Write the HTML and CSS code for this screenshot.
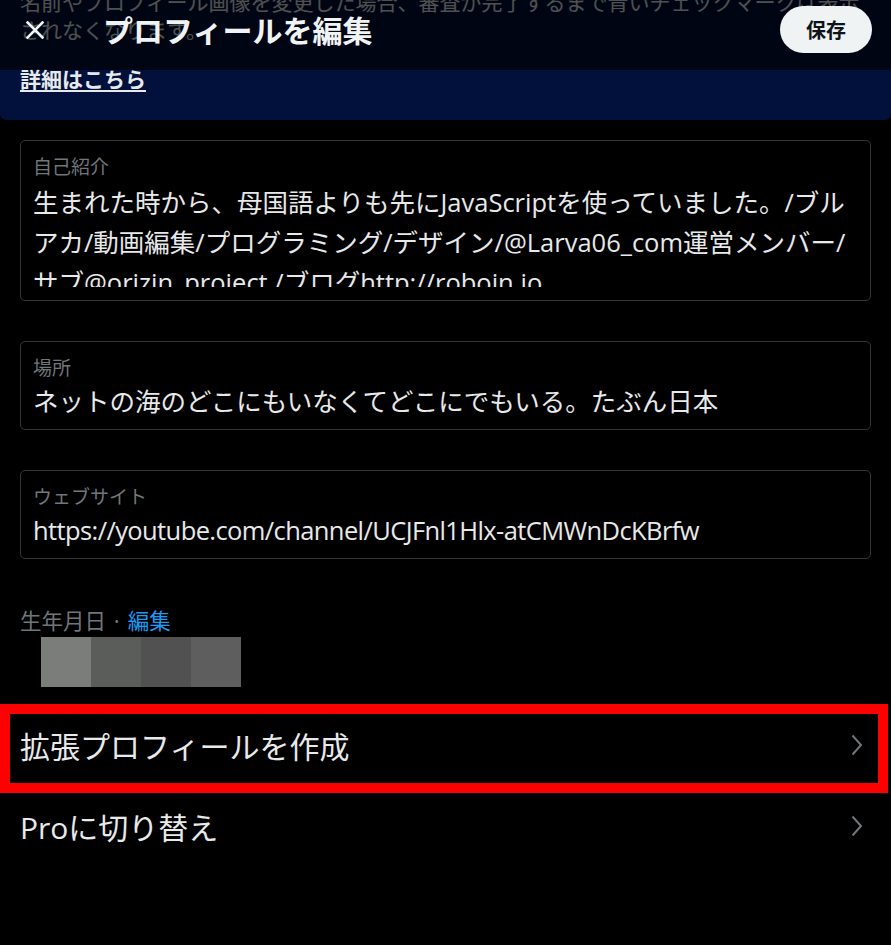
FILE: index.html
```html
<!DOCTYPE html>
<html lang="ja">
<head>
<meta charset="utf-8">
<title>プロフィールを編集</title>
<link rel="stylesheet" href="styles.css">
</head>
<body>
<div class="page">
  <header class="topbar">
    <div class="topbar-row">
      <button class="close-btn" aria-label="閉じる">
        <svg width="18" height="18" viewBox="0 0 18 18"><path d="M1.5 1.5 L16.5 16.5 M16.5 1.5 L1.5 16.5" stroke="#eff3f4" stroke-width="2.6" stroke-linecap="square" fill="none"/></svg>
      </button>
      <h1 class="title">プロフィールを編集</h1>
      <button class="save-btn">保存</button>
    </div>
  </header>

  <section class="notice">
    <p class="notice-text">名前やプロフィール画像を変更した場合、審査が完了するまで青いチェックマークは表示されなくなります。</p>
    <a class="notice-link" href="#">詳細はこちら</a>
  </section>

  <main class="form">
    <div class="field field-bio">
      <div class="field-label">自己紹介</div>
      <div class="field-area">生まれた時から、母国語よりも先にJavaScriptを使っていました。/ブル<br>アカ/動画編集/プログラミング/デザイン/@Larva06_com運営メンバー/<br>サブ@orizin_project /ブログhttp://roboin.io</div>
    </div>

    <div class="field">
      <div class="field-label">場所</div>
      <div class="field-input">ネットの海のどこにもいなくてどこにでもいる。たぶん日本</div>
    </div>

    <div class="field">
      <div class="field-label">ウェブサイト</div>
      <div class="field-input field-url">https://youtube.com/channel/UCJFnl1Hlx-atCMWnDcKBrfw</div>
    </div>

    <div class="birth">
      <div class="birth-head">生年月日 · <a class="birth-edit" href="#">編集</a></div>
      <div class="mosaic">
        <span class="px px1"></span><span class="px px2"></span><span class="px px3"></span><span class="px px4"></span>
      </div>
    </div>
  </main>

  <nav class="menu">
    <a class="menu-item menu-item-marked" href="#">
      <span>拡張プロフィールを作成</span>
      <svg class="chev" width="12" height="22" viewBox="0 0 12 22"><path d="M1.5 1.5 L10 11 L1.5 20.5" stroke="#71767b" stroke-width="2" fill="none"/></svg>
      <span class="highlight"></span>
    </a>
    <a class="menu-item" href="#">
      <span>Proに切り替え</span>
      <svg class="chev" width="12" height="22" viewBox="0 0 12 22"><path d="M1.5 1.5 L10 11 L1.5 20.5" stroke="#71767b" stroke-width="2" fill="none"/></svg>
    </a>
  </nav>
</div>
</body>
</html>
```

FILE: styles.css
```css
* { box-sizing: border-box; }

html, body {
  margin: 0;
  padding: 0;
  background: #000;
}

body {
  font-family: "Open Sans", "Noto Sans CJK JP", sans-serif;
  color: #e7e9ea;
  overflow: hidden;
  height: 945px;
}

.page {
  position: relative;
  display: flow-root;
  width: 891px;
}

/* header overlay */
.topbar {
  position: absolute;
  top: 0;
  left: 0;
  right: 0;
  height: 70px;
  background: rgba(0, 0, 0, 0.66);
  z-index: 5;
}

.topbar-row {
  height: 58px;
  display: flex;
  align-items: center;
  padding: 0 19px 0 26px;
}

.close-btn {
  background: none;
  border: 0;
  padding: 0;
  width: 18px;
  height: 18px;
  display: flex;
  margin-top: 1px;
}

.title {
  margin: 0 0 0 59px;
  font-family: "Noto Sans CJK JP", sans-serif;
  font-size: 30px;
  font-weight: 700;
  line-height: 40px;
  color: #eff3f4;
  flex: 1;
}

.save-btn {
  width: 92px;
  height: 47px;
  border: 0;
  border-radius: 24px;
  background: #eff3f4;
  color: #0f1419;
  font-family: "Noto Sans CJK JP", sans-serif;
  font-size: 20px;
  font-weight: 700;
  margin-top: 1px;
}

/* notice banner */
.notice {
  margin-top: -29px;
  padding: 16px 20px 26px;
  background: #02113c;
  border-radius: 0 0 6px 6px;
}

.notice-text {
  margin: 0;
  font-family: "Noto Sans CJK JP", sans-serif;
  font-size: 21px;
  line-height: 28px;
  color: #e7e9ea;
}

.notice-link {
  display: inline-block;
  margin-top: 21px;
  margin-bottom: 2px;
  font-family: "Noto Sans CJK JP", sans-serif;
  font-size: 21px;
  line-height: 28px;
  font-weight: 700;
  color: #e7e9ea;
  text-decoration: underline;
  text-underline-offset: 3px;
}

/* form */
.form {
  padding: 20px 20px 0;
  display: flex;
  flex-direction: column;
  gap: 40px;
}

.field {
  border: 1px solid #333639;
  border-radius: 5px;
  padding: 13px 12px 10px;
}

.field-bio {
  padding-bottom: 13px;
}

.field-label {
  font-family: "Noto Sans CJK JP", sans-serif;
  font-size: 19px;
  line-height: 24px;
  color: #71767b;
  margin-bottom: 4px;
}

.field-area,
.field-input {
  font-size: 25.5px;
  line-height: 36px;
  color: #e7e9ea;
  white-space: nowrap;
  overflow: hidden;
}

.field-area {
  line-height: 40px;
  height: 105px;
}

.field-url {
  letter-spacing: -0.6px;
}

.birth {
  margin-top: 7px;
}

.birth-head {
  font-family: "Noto Sans CJK JP", sans-serif;
  font-size: 21.5px;
  line-height: 28px;
  color: #71767b;
}

.birth-edit {
  color: #1d9bf0;
  text-decoration: none;
}

.mosaic {
  display: flex;
  margin: 3px 0 0 21px;
}

.px {
  width: 50px;
  height: 50px;
}
.px1 { background: #7b7d7b; }
.px2 { background: #5b5d5b; }
.px3 { background: #515151; }
.px4 { background: #5d5e5d; }

/* menu */
.menu {
  margin-top: 17px;
  display: flex;
  flex-direction: column;
}

.menu-item {
  position: relative;
  height: 81px;
  display: flex;
  align-items: center;
  justify-content: space-between;
  padding: 0 28px 0 20px;
  font-family: "Open Sans", "Noto Sans CJK JP", sans-serif;
  font-size: 30px;
  color: #e7e9ea;
  text-decoration: none;
}

.chev {
  margin-top: 1px;
}

.highlight {
  position: absolute;
  left: 0;
  top: 0;
  width: 888px;
  height: 89px;
  border: 10px solid #ff0000;
  pointer-events: none;
}
```
